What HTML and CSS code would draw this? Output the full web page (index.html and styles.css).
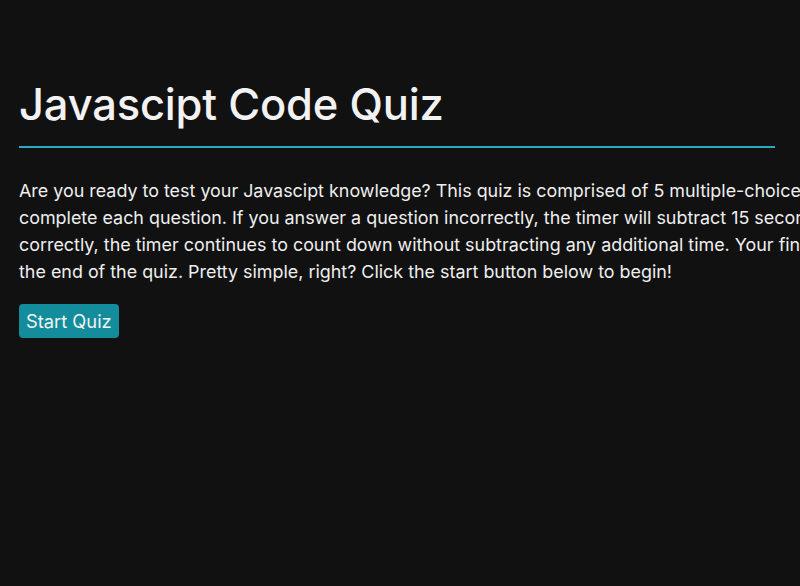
FILE: index.html
```html
<!DOCTYPE html>
<html lang="en">
<head>
<meta charset="utf-8">
<title>Javascipt Code Quiz</title>
<link rel="stylesheet" href="styles.css">
</head>
<body>
<main class="quiz">
  <h1 class="title">Javascipt Code Quiz</h1>
  <hr class="rule">
  <p class="intro">Are you ready to test your Javascipt knowledge? This quiz is comprised of 5 multiple-choice questions, and you will have 75 seconds to<br>complete each question. If you answer a question incorrectly, the timer will subtract 15 seconds from the time remaining. If you answer<br>correctly, the timer continues to count down without subtracting any additional time. Your final score will be the time remaining at<br>the end of the quiz. Pretty simple, right? Click the start button below to begin!</p>
  <button class="start" type="button">Start Quiz</button>
</main>
</body>
</html>
```
FILE: styles.css
```css
html, body {
  margin: 0;
  padding: 0;
  background: #111111;
  overflow: hidden;
}
body {
  width: 800px;
  height: 586px;
  font-family: Inter, "Noto Sans", sans-serif;
  color: #eeeeee;
}
.quiz {
  padding: 72px 0 0 19px;
  width: 756px;
}
.title {
  margin: 0;
  font-size: 43.5px;
  font-weight: 450;
  line-height: 64px;
  color: #f2f2f2;
  letter-spacing: -0.2px;
}
.rule {
  margin: 10px 0 0 0;
  border: 0;
  height: 2px;
  background: #2aa9bf;
}
.intro {
  margin: 29px 0 0 0;
  font-size: 17.9px;
  line-height: 27px;
  white-space: nowrap;
}
.start {
  margin-top: 19px;
  display: block;
  padding: 0 7px;
  height: 34px;
  border: 0;
  border-radius: 4px;
  background: #138c9c;
  color: #f4f4f4;
  font-family: Inter, "Noto Sans", sans-serif;
  font-size: 18.3px;
  line-height: 34px;
}
```
